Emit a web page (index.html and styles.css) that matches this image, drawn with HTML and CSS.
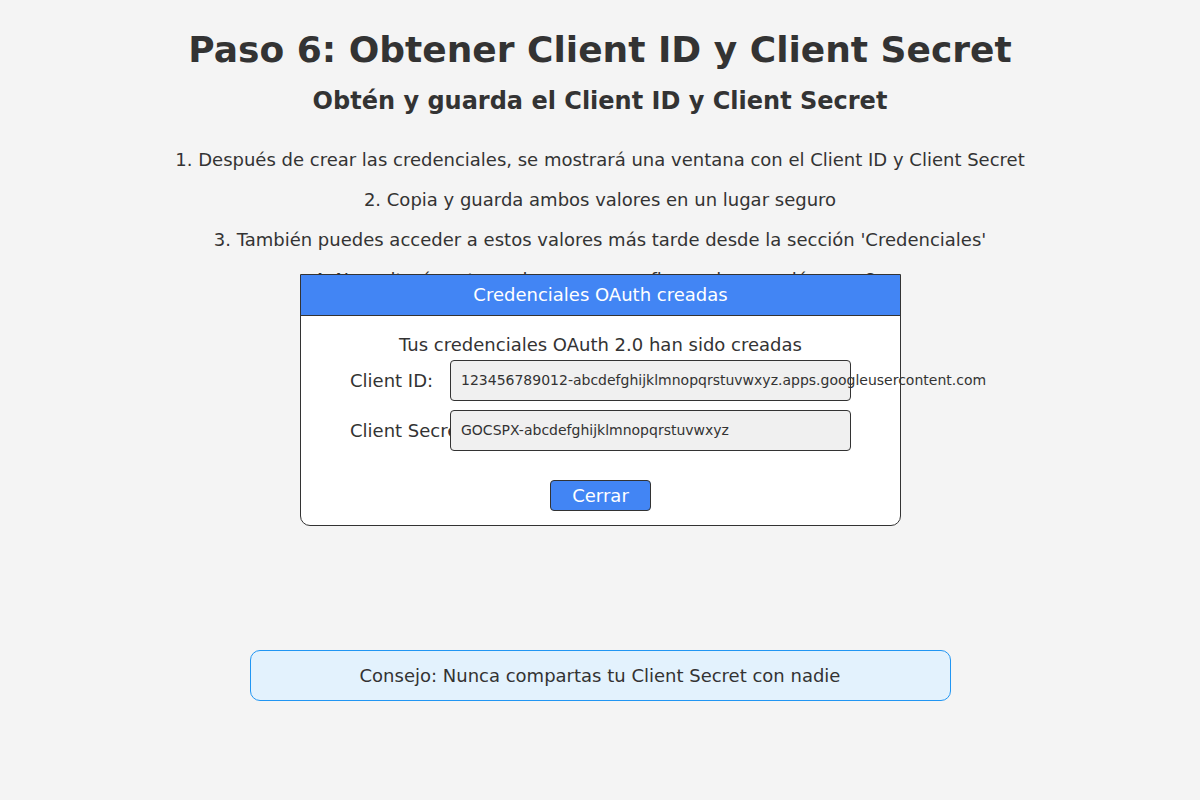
FILE: index.html
```html
<!DOCTYPE html>
<html lang="es">
<head>
<meta charset="utf-8">
<title>Paso 6: Obtener Client ID y Client Secret</title>
<link rel="stylesheet" href="styles.css">
</head>
<body>
<main class="page">
  <h1 class="title">Paso 6: Obtener Client ID y Client Secret</h1>
  <h2 class="subtitle">Obtén y guarda el Client ID y Client Secret</h2>
  <div class="steps">
    <p class="step">1. Después de crear las credenciales, se mostrará una ventana con el Client ID y Client Secret</p>
    <p class="step">2. Copia y guarda ambos valores en un lugar seguro</p>
    <p class="step">3. También puedes acceder a estos valores más tarde desde la sección 'Credenciales'</p>
    <p class="step">4. Necesitarás estos valores para configurar la conexión en n8n</p>
  </div>

  <div class="modal">
    <div class="modal-header">Credenciales OAuth creadas</div>
    <div class="modal-body">
      <p class="modal-intro">Tus credenciales OAuth 2.0 han sido creadas</p>
      <div class="field">
        <span class="field-label">Client ID:</span>
        <div class="field-value">123456789012-abcdefghijklmnopqrstuvwxyz.apps.googleusercontent.com</div>
      </div>
      <div class="field">
        <span class="field-label">Client Secret:</span>
        <div class="field-value">GOCSPX-abcdefghijklmnopqrstuvwxyz</div>
      </div>
      <div class="modal-actions">
        <button class="btn-close" type="button">Cerrar</button>
      </div>
    </div>
  </div>

  <div class="tip">Consejo: Nunca compartas tu Client Secret con nadie</div>
</main>
</body>
</html>
```

FILE: styles.css
```css
* {
  box-sizing: border-box;
}

html, body {
  margin: 0;
  padding: 0;
  background: #f4f4f4;
}

body {
  font-family: "DejaVu Sans", "Noto Sans", sans-serif;
  color: #333333;
  width: 1200px;
  height: 800px;
  overflow: hidden;
}

.page {
  position: relative;
  padding-top: 30px;
  display: flex;
  flex-direction: column;
  align-items: center;
}

.title {
  margin: 0;
  font-size: 36px;
  line-height: 40px;
  font-weight: bold;
  text-align: center;
}

.subtitle {
  margin: 16px 0 0;
  font-size: 24px;
  line-height: 30px;
  font-weight: bold;
  text-align: center;
}

.steps {
  margin-top: 24px;
  display: flex;
  flex-direction: column;
  align-items: center;
}

.step {
  margin: 0;
  font-size: 18px;
  line-height: 40px;
  text-align: center;
  white-space: nowrap;
}

.modal {
  position: absolute;
  left: 300px;
  top: 274px;
  width: 601px;
  background: #ffffff;
  border: 1px solid #333333;
  border-radius: 0 0 10px 10px;
}

.modal-header {
  height: 41px;
  line-height: 40px;
  background: #4285f4;
  color: #ffffff;
  font-size: 18px;
  text-align: center;
  border-bottom: 1px solid #333333;
}

.modal-body {
  padding: 16px 49px 14px;
  display: flex;
  flex-direction: column;
}

.modal-intro {
  margin: 0 0 2px;
  font-size: 18px;
  line-height: 26px;
  text-align: center;
}

.field {
  display: flex;
  align-items: center;
  height: 40px;
  margin-bottom: 10px;
}

.field-label {
  flex: 0 0 100px;
  width: 100px;
  min-width: 0;
  font-size: 18px;
  white-space: nowrap;
  overflow: visible;
}

.field-value {
  flex: 0 0 401px;
  width: 401px;
  min-width: 0;
  height: 41px;
  padding: 0 10px;
  display: flex;
  align-items: center;
  background: #f0f0f0;
  border: 1px solid #333333;
  border-radius: 4px;
  font-size: 14px;
  white-space: nowrap;
  overflow: visible;
}

.modal-actions {
  display: flex;
  justify-content: center;
  margin-top: 20px;
}

.btn-close {
  width: 101px;
  height: 31px;
  padding: 0;
  background: #4285f4;
  color: #ffffff;
  border: 1px solid #333333;
  border-radius: 4px;
  font-family: "DejaVu Sans", "Noto Sans", sans-serif;
  font-size: 18px;
  line-height: 29px;
}

.tip {
  margin-top: 350px;
  width: 701px;
  height: 51px;
  line-height: 49px;
  background: #e3f2fd;
  border: 1px solid #2196f3;
  border-radius: 10px;
  font-size: 18px;
  text-align: center;
}
```
